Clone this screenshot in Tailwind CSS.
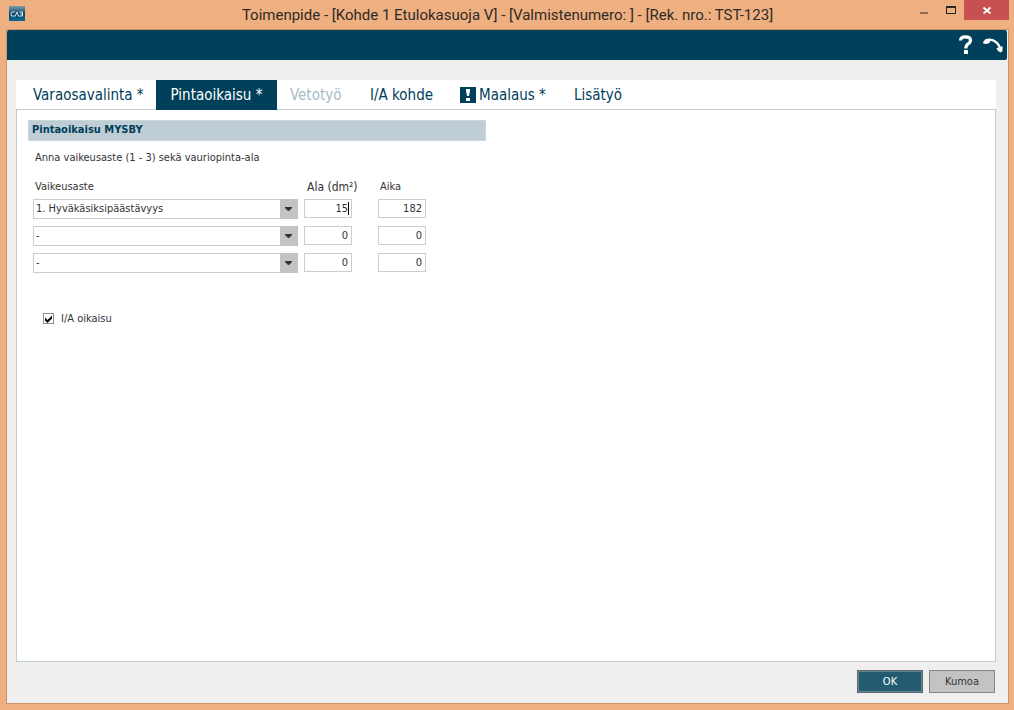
<!DOCTYPE html>
<html lang="fi">
<head>
<meta charset="utf-8">
<title>Toimenpide</title>
<meta name="viewport" content="width=device-width, initial-scale=1">
<script src="https://cdn.jsdelivr.net/npm/@tailwindcss/browser@4"></script>
</head>
<body class="flex min-h-screen flex-col bg-[#eeb080] px-[6px] pr-[5px] pb-[6px] font-['DejaVu_Sans_Condensed','DejaVu_Sans',sans-serif] text-[11px] text-[#333333]">
  <header class="grid h-[29px] grid-cols-[120px_1fr_120px] items-start">
    <svg class="mt-[6px] ml-[3px] h-[15px] w-[16px]" viewBox="0 0 16 15" aria-label="CAB">
      <defs><linearGradient id="g" x1="0" y1="0" x2="0" y2="1"><stop offset="0" stop-color="#7d9bb0"/><stop offset=".35" stop-color="#2f6484"/><stop offset=".5" stop-color="#0a4263"/><stop offset="1" stop-color="#0c6a94"/></linearGradient></defs>
      <rect width="16" height="15" fill="url(#g)"/>
      <path d="M5.500 6H3Q2 6 2 8T3 10H5.500M6 10.500L8 6L9.700 10.500M10.500 6H13.500V10H10.300M11.300 8H13.300" fill="none" stroke="#dfeaf0" stroke-width="1"/>
    </svg>
    <h1 class="pt-[5px] text-center font-[Roboto,'Noto_Sans',sans-serif] text-[15px] leading-[20px] whitespace-nowrap text-[#2e2a28]">Toimenpide - [Kohde 1 Etulokasuoja V] - [Valmistenumero: ] - [Rek. nro.: TST-123]</h1>
    <div class="flex justify-end">
      <button type="button" aria-label="Pienennä" class="h-5 w-[27px]"><svg class="h-5 w-[27px]" viewBox="0 0 27 20"><rect x="10" y="12" width="8" height="2" fill="#8f6d55"/></svg></button>
      <button type="button" aria-label="Suurenna" class="h-5 w-[27px]"><svg class="h-5 w-[27px]" viewBox="0 0 27 20"><path d="M9 6h10v8H9zM10 8v5h8V8z" fill="#292522" fill-rule="evenodd"/></svg></button>
      <button type="button" aria-label="Sulje" class="h-5 w-[45px] bg-[#c75050]"><svg class="h-5 w-[45px]" viewBox="0 0 45 20"><path d="M19.500 7.500L26.500 13.500M26.500 7.500L19.500 13.500" stroke="#fff" stroke-width="1.800"/></svg></button>
    </div>
  </header>

  <main class="flex flex-1 flex-col border border-[#c99468] bg-[#efefef]">
    <div class="mr-px flex h-[30px] items-center justify-end rounded-tl-[2px] rounded-r-[2px] bg-[#00405a] pr-[3px]">
      <button type="button" aria-label="Ohje"><svg class="h-[30px] w-[28px]" viewBox="0 0 28 30"><path d="M6.500 10.500Q6.700 6.800 11.300 6.800Q16.500 6.800 16.500 10.300Q16.500 12.500 14 14Q11.800 15.500 11.800 18.500" fill="none" stroke="#fff" stroke-width="3.200"/><rect x="10" y="20" width="4" height="4" fill="#fff"/></svg></button>
      <button type="button" aria-label="Kumoa toiminto"><svg class="h-[30px] w-[22px]" viewBox="0 0 22 30"><path d="M3 11C10 7.500 17 12 18.500 20" fill="none" stroke="#fff" stroke-width="2.400"/><path d="M1 12L3.500 9.500L8.500 9.300L7.500 13L4 14L1.500 13.500ZM14.500 18L17 17.500L20.500 16V21L18.500 22.500L15.500 20.500Z" fill="#fff"/></svg></button>
    </div>

    <div class="flex flex-1 flex-col px-[9px] pr-[12px] pt-5 pb-[10px]">
      <nav role="tablist" class="flex h-[29px] bg-white text-[15px] text-[#00405a]">
        <button role="tab" type="button" class="w-[140px] pt-[2px] pl-[17px] text-left">Varaosavalinta *</button>
        <button role="tab" type="button" aria-selected="true" class="relative h-[30px] w-[121px] bg-[#00405a] pt-px text-white">Pintaoikaisu *</button>
        <button role="tab" type="button" disabled class="w-20 pt-[2px] pl-[13px] text-left text-[#a6bbc5]">Vetotyö</button>
        <button role="tab" type="button" class="w-[90px] pt-[2px] pl-[13px] text-left">I/A kohde</button>
        <button role="tab" type="button" class="flex w-[114px] items-center gap-[3px] pt-px pl-[13px]"><svg class="h-4 w-4" viewBox="0 0 16 16" aria-hidden="true"><rect width="16" height="16" fill="#00405a"/><path d="M6 2h4v2L9 9H7L6 4zM6 11h4v3H6z" fill="#fff"/></svg>Maalaus *</button>
        <button role="tab" type="button" class="pt-[2px] pl-[13px] text-left">Lisätyö</button>
      </nav>

      <section class="flex-1 border border-[#bfccd4] bg-white px-[11px] pt-[10px]">
        <h2 class="h-[21px] w-[458px] border border-[#cbd7dd] bg-[#bfcdd5] px-[3px] text-[11px] leading-[18px] font-bold text-[#00405a]">Pintaoikaisu MYSBY</h2>
        <p class="mt-[9px] ml-[7px] leading-[16px]">Anna vaikeusaste (1 - 3) sekä vauriopinta-ala</p>
        <div class="mt-[13px] ml-[5px] grid grid-cols-[265px_48px_48px] items-start">
          <div class="pl-[2px] leading-[16px]" id="grade">Vaikeusaste</div>
          <div class="pl-[9px] text-[12px] leading-[16px] whitespace-nowrap" id="area">Ala (dm²)</div>
          <div class="pl-[34px] leading-[16px]" id="time">Aika</div>
        </div>
        <div class="mt-[4px] ml-[5px] grid grid-cols-[265px_48px_48px] gap-x-[6px] gap-y-[7px]">
          <div class="relative h-5"><select aria-labelledby="grade" class="h-5 w-full appearance-none border border-[#cdcdcd] bg-white pt-px pl-[2px]"><option>1. Hyväkäsiksipäästävyys</option></select><svg class="pointer-events-none absolute top-0 right-0 h-5 w-[18px]" viewBox="0 0 18 20"><rect width="18" height="20" fill="#c3c3c3"/><path d="M5 8h7v1l-3 3h-1l-3-3z" fill="#333"/></svg></div>
          <div class="relative h-[19px]"><input aria-labelledby="area" value="15" class="h-[19px] w-12 border border-[#cdcdcd] bg-white pr-[3px] text-right"><span class="absolute top-[3px] right-[3px] h-[13px] w-px bg-black"></span></div>
          <input aria-labelledby="time" value="182" class="ml-5 h-[19px] w-12 border border-[#cdcdcd] bg-white pr-[3px] text-right">
          <div class="relative h-5"><select aria-labelledby="grade" class="h-5 w-full appearance-none border border-[#cdcdcd] bg-white pt-px pl-[2px]"><option>-</option></select><svg class="pointer-events-none absolute top-0 right-0 h-5 w-[18px]" viewBox="0 0 18 20"><rect width="18" height="20" fill="#c3c3c3"/><path d="M5 8h7v1l-3 3h-1l-3-3z" fill="#333"/></svg></div>
          <input aria-labelledby="area" value="0" class="h-[19px] w-12 border border-[#cdcdcd] bg-white pr-[3px] text-right">
          <input aria-labelledby="time" value="0" class="ml-5 h-[19px] w-12 border border-[#cdcdcd] bg-white pr-[3px] text-right">
          <div class="relative h-5"><select aria-labelledby="grade" class="h-5 w-full appearance-none border border-[#cdcdcd] bg-white pt-px pl-[2px]"><option>-</option></select><svg class="pointer-events-none absolute top-0 right-0 h-5 w-[18px]" viewBox="0 0 18 20"><rect width="18" height="20" fill="#c3c3c3"/><path d="M5 8h7v1l-3 3h-1l-3-3z" fill="#333"/></svg></div>
          <input aria-labelledby="area" value="0" class="h-[19px] w-12 border border-[#cdcdcd] bg-white pr-[3px] text-right">
          <input aria-labelledby="time" value="0" class="ml-5 h-[19px] w-12 border border-[#cdcdcd] bg-white pr-[3px] text-right">
        </div>
        <label class="mt-[36px] ml-[15px] flex w-fit items-center leading-[16px]">
          <span class="relative mr-[7px] h-[11px] w-[11px]"><input type="checkbox" checked class="peer block h-[11px] w-[11px] appearance-none border border-[#8e8e8e] bg-white"><svg class="pointer-events-none absolute inset-0 hidden h-[11px] w-[11px] peer-checked:block" viewBox="0 0 11 11"><path d="M2 4.500L4.500 7L9 2.500V5.500L4.500 10L2 7.500Z" fill="#000"/></svg></span><span class="pt-[2px]">I/A oikaisu</span>
        </label>
      </section>

      <footer class="mt-2 flex justify-end gap-[6px] pr-[1px]">
        <button type="button" class="h-[23px] w-[66px] border border-[#666666] bg-[#245b70] pt-px text-white inset-ring inset-ring-[#5d8698]">OK</button>
        <button type="button" class="h-[23px] w-[66px] border border-[#858585] bg-[#c3c3c3] pt-px">Kumoa</button>
      </footer>
    </div>
  </main>
</body>
</html>
